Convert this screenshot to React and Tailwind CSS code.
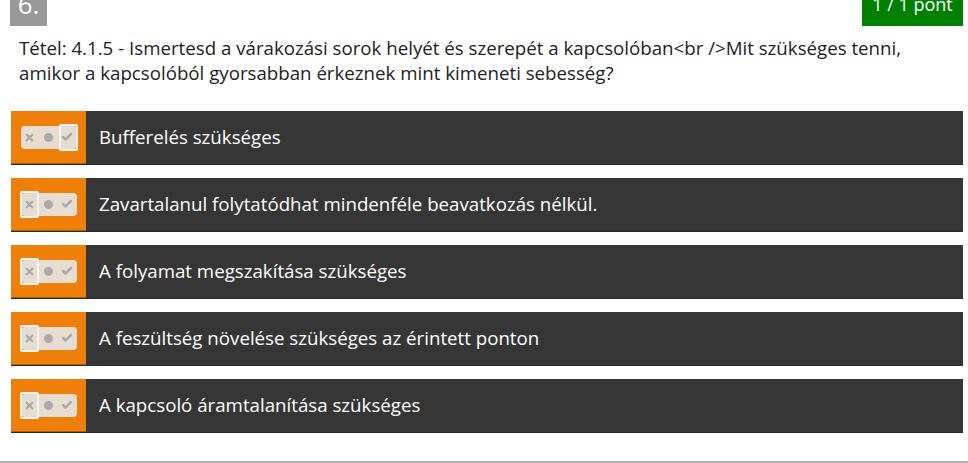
import { X, Check } from 'lucide-react';

const answers = [
    { text: 'Bufferelés szükséges', pick: 'right' },
    { text: 'Zavartalanul folytatódhat mindenféle beavatkozás nélkül.', pick: 'left' },
    { text: 'A folyamat megszakítása szükséges', pick: 'left' },
    { text: 'A feszültség növelése szükséges az érintett ponton', pick: 'left' },
    { text: 'A kapcsoló áramtalanítása szükséges', pick: 'left' },
];

function Toggle({ pick }) {
    return (
        <div className="relative w-[56px] h-[23px] rounded-[4px] bg-[#e6e6e6]/90 flex items-center">
            <div className="flex-1 flex justify-center">
                <X size={11} strokeWidth={5} className="text-[#aaaaaa]" />
            </div>
            <div className="flex-1 flex justify-center">
                <div className="w-[9px] h-[9px] rounded-full bg-[#aaaaaa]" />
            </div>
            <div className="flex-1 flex justify-center">
                <Check size={12} strokeWidth={5} className="text-[#aaaaaa]" />
            </div>
            {/* selected segment frame */}
            <div
                className={`absolute top-[-2px] w-[19px] h-[27px] border-2 border-[#f2f2f2] rounded-[2px] ${pick === 'right' ? 'right-[-1px]' : 'left-[-1px]'}`}
            />
        </div>
    );
}

export default function App() {
    return (
        <div className="min-h-[463px] bg-white border-b-2 border-[#b0b0b0]" style={{ fontFamily: '"Open Sans", sans-serif' }}>
            <div className="w-[963px] pl-[10px]">
                {/* Header */}
                <div className="flex justify-between items-start">
                    <div className="w-[37px] h-[26px] bg-[#999999] overflow-hidden flex justify-center">
                        <span className="text-white text-[26px] leading-none -mt-[9px]">6.</span>
                    </div>
                    <div className="w-[101px] h-[26px] bg-[#008000] overflow-hidden flex justify-center">
                        <span className="text-white text-[18px] leading-none -mt-[5px]">1 / 1 pont</span>
                    </div>
                </div>

                {/* Question */}
                <p className="pl-[9px] pt-[9px] text-[#222] text-[18.7px] leading-[25px]">
                    Tétel: 4.1.5 - Ismertesd a várakozási sorok helyét és szerepét a kapcsolóban&lt;br /&gt;Mit szükséges tenni,
                    <br />
                    amikor a kapcsolóból gyorsabban érkeznek mint kimeneti sebesség?
                </p>

                {/* Answers */}
                <div className="mt-[26px] ml-[1px] flex flex-col gap-[13px]">
                    {answers.map(a => (
                        <div key={a.text} className="flex h-[54px] bg-[#363636] border-b border-[#2a2a2a]">
                            <div className="w-[75px] bg-[#ee800a] border-b border-[#b05e06] flex items-center justify-center">
                                <Toggle pick={a.pick} />
                            </div>
                            <div className="flex-1 flex items-center pl-[13px] text-white text-[18.7px]">
                                {a.text}
                            </div>
                        </div>
                    ))}
                </div>
            </div>
        </div>
    );
}
